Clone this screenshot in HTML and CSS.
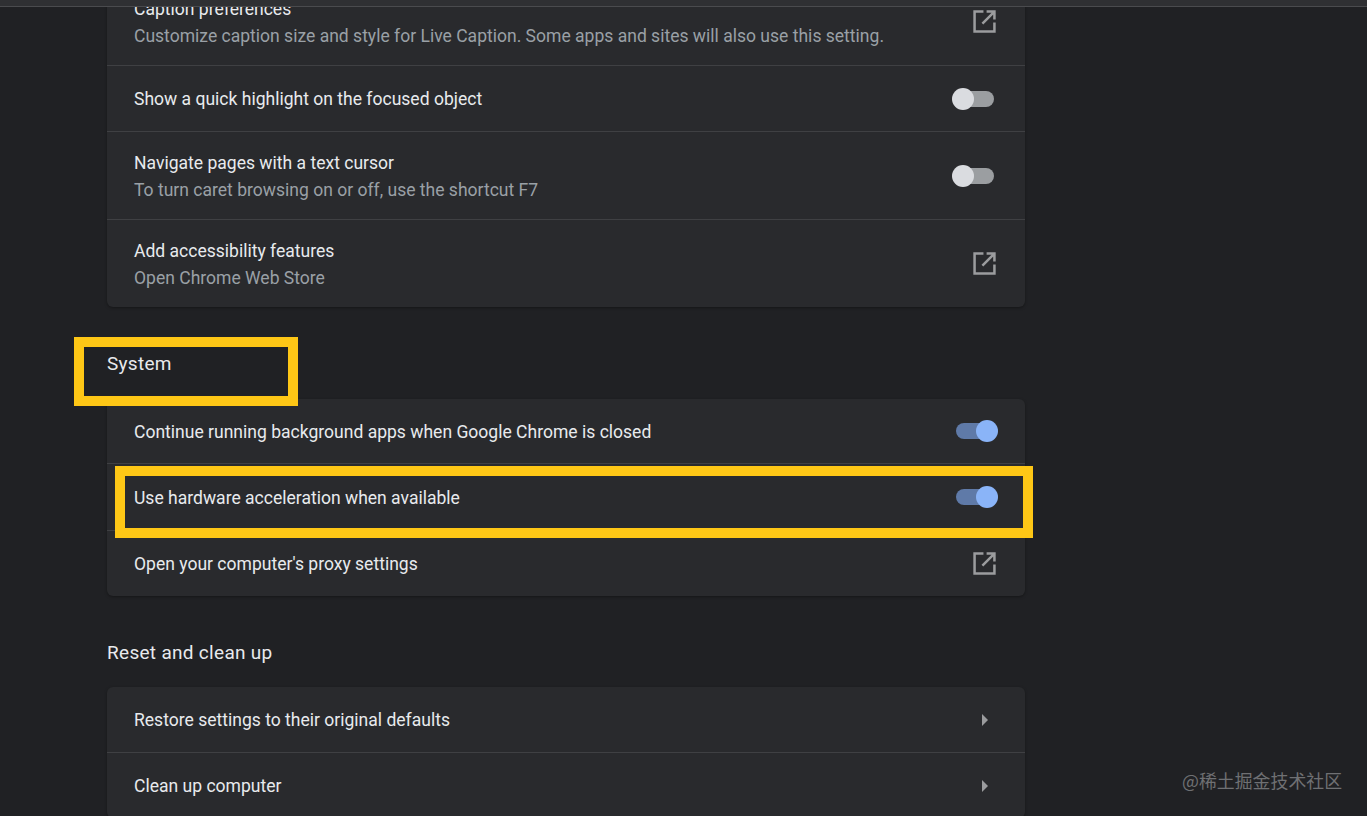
FILE: index.html
```html
<!DOCTYPE html>
<html lang="en">
<head>
<meta charset="utf-8">
<title>Settings</title>
<link rel="stylesheet" href="styles.css">
</head>
<body>
<div class="topbar"></div>
<main class="page">
  <section class="card first">
    <div class="row tall">
      <div class="text"><div class="title">Caption preferences</div><div class="sub">Customize caption size and style for Live Caption. Some apps and sites will also use this setting.</div></div>
      <svg class="ext" viewBox="0 0 22 22"><path d="M10 1.500H1.500v19h19V12M13 1.500h7.500V9M20 2L9 13" /></svg>
    </div>
    <div class="row short">
      <div class="text"><div class="title">Show a quick highlight on the focused object</div></div>
      <span class="toggle off"></span>
    </div>
    <div class="row tall">
      <div class="text"><div class="title">Navigate pages with a text cursor</div><div class="sub">To turn caret browsing on or off, use the shortcut F7</div></div>
      <span class="toggle off"></span>
    </div>
    <div class="row tall">
      <div class="text"><div class="title">Add accessibility features</div><div class="sub">Open Chrome Web Store</div></div>
      <svg class="ext" viewBox="0 0 22 22"><path d="M10 1.500H1.500v19h19V12M13 1.500h7.500V9M20 2L9 13" /></svg>
    </div>
  </section>

  <h2 class="heading system">System</h2>
  <section class="card">
    <div class="row short compact">
      <div class="text"><div class="title">Continue running background apps when Google Chrome is closed</div></div>
      <span class="toggle on"></span>
    </div>
    <div class="row short roomy">
      <div class="text"><div class="title">Use hardware acceleration when available</div></div>
      <span class="toggle on"></span>
    </div>
    <div class="row short">
      <div class="text"><div class="title">Open your computer's proxy settings</div></div>
      <svg class="ext" viewBox="0 0 22 22"><path d="M10 1.500H1.500v19h19V12M13 1.500h7.500V9M20 2L9 13" /></svg>
    </div>
  </section>

  <h2 class="heading reset">Reset and clean up</h2>
  <section class="card">
    <div class="row short">
      <div class="text"><div class="title">Restore settings to their original defaults</div></div>
      <svg class="arrow" viewBox="0 0 6 12"><path d="M0 0l6 6-6 6z" /></svg>
    </div>
    <div class="row short">
      <div class="text"><div class="title">Clean up computer</div></div>
      <svg class="arrow" viewBox="0 0 6 12"><path d="M0 0l6 6-6 6z" /></svg>
    </div>
  </section>
</main>
<div class="mark box-system"></div>
<div class="mark box-accel"></div>
<div class="watermark">@稀土掘金技术社区</div>
</body>
</html>
```
FILE: styles.css
```css
html, body {
  margin: 0;
  height: 100%;
  overflow: hidden;
  background: #202124;
}
body {
  position: relative;
  font-family: Roboto, "Liberation Sans", sans-serif;
  color: #e8eaed;
}
.topbar {
  position: absolute;
  top: 0;
  left: 0;
  right: 0;
  height: 6px;
  background: #2f3033;
  border-bottom: 1px solid #4a4b4e;
  z-index: 2;
}
.page {
  width: 918px;
  margin: -23px 0 0 107px;
}
.card {
  background: #292a2d;
  border-radius: 6px;
  box-shadow: 0 1px 3px rgba(0, 0, 0, .35);
}
.row {
  display: flex;
  align-items: center;
  justify-content: space-between;
  padding: 0 27px;
  box-sizing: border-box;
  border-top: 1px solid #3f4043;
}
.row:first-child { border-top: 0; }
.tall { height: 88px; }
.short { height: 66px; }
.row.short:first-child { height: 65px; }
.row.compact:first-child { height: 64px; }
.row.roomy { height: 67px; }
.text { padding-top: 2px; }
.first .row:first-child .text { padding-top: 3px; }
.title {
  font-size: 17.55px;
  line-height: 27px;
  color: #e8eaed;
}
.sub {
  font-size: 17.55px;
  line-height: 27px;
  color: #9aa0a6;
}
.ext {
  width: 23px;
  height: 23px;
  margin-right: 2px;
  fill: none;
  stroke: #9b9c9e;
  stroke-width: 2.400;
  flex: none;
}
.arrow {
  width: 6px;
  height: 12px;
  margin-right: 10px;
  fill: #9b9c9e;
  flex: none;
}
.toggle {
  position: relative;
  display: block;
  width: 37px;
  height: 16px;
  border-radius: 8px;
  flex: none;
}
.toggle::after {
  content: "";
  position: absolute;
  top: -3px;
  width: 22px;
  height: 22px;
  border-radius: 50%;
}
.toggle.off {
  margin-right: 4px;
  background: #9b9ea1;
}
.toggle.off::after {
  left: -5px;
  background: #dadce0;
}
.toggle.on {
  margin-right: 5px;
  background: #5f7aa8;
}
.toggle.on::after {
  right: -5px;
  background: #8ab4f8;
}
.heading {
  margin: 0;
  font-size: 19px;
  font-weight: 400;
  letter-spacing: .3px;
  line-height: 26px;
  color: #e8eaed;
}
.system { padding: 44px 0 22px; }
.reset { padding: 44px 0 21px; }
.mark {
  position: absolute;
  box-sizing: border-box;
  border: 10px solid #fec716;
}
.box-system {
  left: 74px;
  top: 337px;
  width: 224px;
  height: 69px;
}
.box-accel {
  left: 115px;
  top: 466px;
  width: 918px;
  height: 72px;
}
.watermark {
  position: absolute;
  left: 1182px;
  top: 767px;
  font-family: "Noto Sans CJK SC", sans-serif;
  font-size: 17.900px;
  line-height: 26px;
  color: #6f7073;
}
```
